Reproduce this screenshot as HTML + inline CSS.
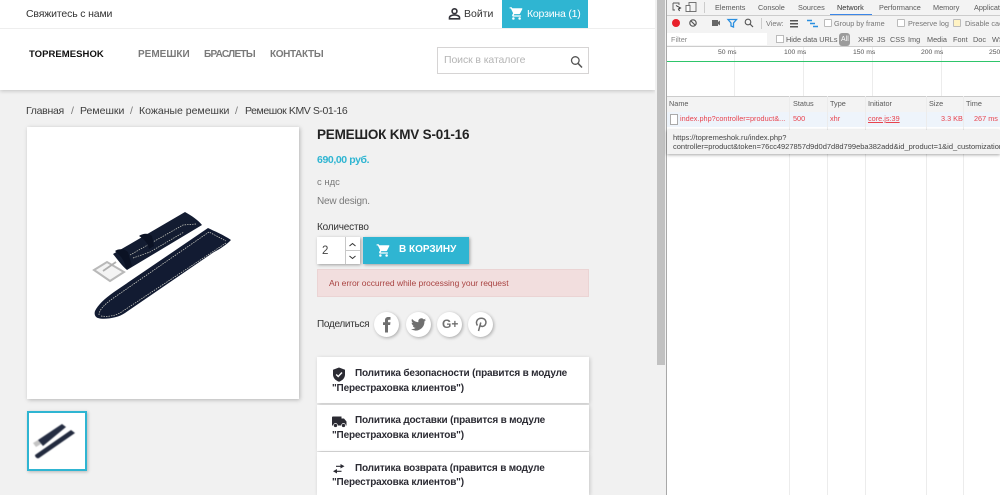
<!DOCTYPE html>
<html lang="ru"><head><meta charset="utf-8"><title>Ремешок KMV S-01-16</title>
<style>
html,body{margin:0;padding:0;width:1000px;height:495px;overflow:hidden;background:#fff;font-family:"Liberation Sans","Noto Sans CJK SC",sans-serif;}
.a{position:absolute;white-space:nowrap;}
.b{position:absolute;}
.dt{font-size:7.3px;color:#5a5a5a;}
.pol{position:absolute;left:317px;width:272px;background:#fff;}
.pt{position:absolute;font-size:10px;font-weight:bold;color:#2b2b33;white-space:nowrap;letter-spacing:-.18px;}
.ci{position:absolute;top:312px;width:25px;height:25px;border-radius:50%;background:#fff;box-shadow:1px 1px 3px rgba(0,0,0,.3);}
.vl{position:absolute;top:47px;width:1px;height:448px;background:#ececec;}
.bc{font-size:10.5px;line-height:14px;top:104px;color:#3d3d3d;}
.nv{font-size:10px;font-weight:bold;color:#7a7a7a;line-height:14px;top:48px;}
.ms{font-size:6.8px;color:#555;line-height:10px;top:48px;}
</style></head><body>

<!-- page background -->
<div class="b" style="left:0;top:0;width:655px;height:495px;background:#f1f1f1"></div>
<div class="b" style="left:0;top:0;width:655px;height:90px;background:#fff;box-shadow:0 1px 4px rgba(0,0,0,.2)"></div>
<div class="b" style="left:0;top:28px;width:655px;height:1px;background:#eeeeee"></div>

<!-- top bar -->
<div class="a" style="left:26px;top:7px;font-size:10.5px;color:#333;line-height:14px;letter-spacing:-.15px">Свяжитесь с нами</div>
<svg class="b" style="left:448px;top:7px" width="13" height="13" viewBox="0 0 13 13"><circle cx="6.5" cy="4.2" r="2.4" fill="none" stroke="#33333a" stroke-width="1.6"/><path d="M1.500 11.800V10.500c0-1.700 3-2.500 5-2.500s5 .8 5 2.500v1.300z" fill="none" stroke="#33333a" stroke-width="1.6"/></svg>
<div class="a" style="left:464px;top:7px;font-size:10.5px;color:#333;line-height:14px">Войти</div>
<div class="b" style="left:502px;top:0;width:86px;height:28px;background:#2fb5d2"></div>
<svg class="b" style="left:509px;top:6px" width="15" height="15" viewBox="0 0 24 24"><path fill="#fff" d="M7 18a2 2 0 1 0 0 4 2 2 0 0 0 0-4zM1 2v2h2l3.6 7.6-1.4 2.4c-.7 1.300.3 3 1.800 3h12v-2H7.400l1.100-2h7.500c.7 0 1.400-.4 1.700-1L21.300 5c.4-.7-.1-1.500-.9-1.500H5.200L4.300 2zM17 18a2 2 0 1 0 0 4 2 2 0 0 0 0-4z"/></svg>
<div class="a" style="left:527px;top:7px;font-size:10.5px;color:#fff;line-height:14px;letter-spacing:-.2px">Корзина (1)</div>

<!-- nav -->
<div class="a" style="left:29px;top:49px;font-size:9.500px;font-weight:bold;color:#111;line-height:12px;letter-spacing:.05px">TOPREMESHOK</div>
<div class="a nv" style="left:138px">РЕМЕШКИ</div>
<div class="a nv" style="left:204px;letter-spacing:-.7px">БРАСЛЕТЫ</div>
<div class="a nv" style="left:270px;letter-spacing:-.35px">КОНТАКТЫ</div>
<div class="b" style="left:437px;top:47px;width:150px;height:25px;border:1px solid #d6d4d4;background:#fff"></div>
<div class="a" style="left:444px;top:53px;font-size:10.5px;color:#b5b5b5;line-height:14px;letter-spacing:-.1px">Поиск в каталоге</div>
<svg class="b" style="left:570px;top:55px" width="13" height="14" viewBox="0 0 13 14"><circle cx="5.300" cy="5.500" r="3.800" fill="none" stroke="#555" stroke-width="1.300"/><path d="M8 8.300l4 4.200" stroke="#555" stroke-width="1.500" fill="none"/></svg>

<!-- breadcrumb -->
<div class="a bc" style="left:26px;letter-spacing:-.3px">Главная</div>
<div class="a bc" style="left:71px;color:#777">/</div>
<div class="a bc" style="left:80px">Ремешки</div>
<div class="a bc" style="left:130px;color:#777">/</div>
<div class="a bc" style="left:139px">Кожаные ремешки</div>
<div class="a bc" style="left:235px;color:#777">/</div>
<div class="a bc" style="left:245px;letter-spacing:-.42px">Ремешок KMV S-01-16</div>

<!-- main image -->
<div class="b" style="left:27px;top:127px;width:272px;height:272px;background:#fff;box-shadow:1px 1px 4px rgba(0,0,0,.25)"></div>
<svg class="b" style="left:27px;top:127px" width="272" height="272" viewBox="27 127 272 272">
<g style="filter:blur(.35px)">
<path d="M94 270L107 262L124 272L110 281z" fill="#f4f4f4" stroke="#b9b9b9" stroke-width="2"/>
<path d="M103 271L116 262" stroke="#b0b0b0" stroke-width="1.800"/>
<path d="M113 254L185 212C192 216 198 220 202 225L127 270C122 266 118 260 113 254z" fill="#131c31"/>
<path d="M95 311C98 305 104 299 114 292L208 228C214 231 224 235 231 240C226 245 220 249 214 252L125 313C118 318 104 320 98 318C95 317 94 314 95 311z" fill="#121b32"/>
<path d="M99 315C99 310 104 305 112 299L209 232L226 241" fill="none" stroke="#d8d8cc" stroke-width=".7" stroke-dasharray="1.500 1"/>
<path d="M101 316C108 317 116 316 123 311L226 243" fill="none" stroke="#d8d8cc" stroke-width=".7" stroke-dasharray="1.500 1"/>
<path d="M130 255L183 225L196 224" fill="none" stroke="#d0d0c4" stroke-width=".7" stroke-dasharray="1.500 1"/>
<path d="M133 258L150 252L184 232" fill="none" stroke="#d0d0c4" stroke-width=".7" stroke-dasharray="1.500 1"/>
<path d="M139 236C143 233 149 233 152 236L154 246L149 249C148 243 144 239 139 236z" fill="#0b1224"/>
<path d="M115 251C119 248 125 249 128 252L132 266L126 269C125 261 121 256 115 251z" fill="#0b1224"/>
</g>
</svg>

<!-- thumbnail -->
<div class="b" style="left:27px;top:411px;width:56px;height:56px;border:2px solid #2fb5d2;background:#fff;box-shadow:1px 1px 3px rgba(0,0,0,.25)"></div>
<svg class="b" style="left:29px;top:413px" width="56" height="56" viewBox="0 0 56 56">
<g style="filter:blur(.4px)">
<path d="M4 30L9 27L12 31L7 34z" fill="#c4c4c4"/>
<path d="M9 27L33 11L37 14L14 33z" fill="#252d42"/>
<path d="M6 42L42 17L46 20L10 45C8 46 6 44 6 42z" fill="#222a3e"/>
</g>
</svg>

<!-- product info -->
<div class="a" style="left:317px;top:126px;font-size:13.500px;font-weight:bold;color:#232323;line-height:18px;letter-spacing:-.2px">РЕМЕШОК KMV S-01-16</div>
<div class="a" style="left:317px;top:153px;font-size:10.5px;font-weight:bold;color:#2fb5d2;line-height:14px;letter-spacing:-.4px">690,00 руб.</div>
<div class="a" style="left:317px;top:177px;font-size:9.500px;color:#7a7a7a;line-height:12px">с ндс</div>
<div class="a" style="left:317px;top:195px;font-size:10px;color:#7a7a7a;line-height:14px;letter-spacing:-.2px">New design.</div>
<div class="a" style="left:317px;top:221px;font-size:10px;color:#333;line-height:14px;letter-spacing:-.2px">Количество</div>

<!-- quantity -->
<div class="b" style="left:317px;top:237px;width:43px;height:27px;background:#fff;box-shadow:1px 1px 3px rgba(0,0,0,.35)"></div>
<div class="b" style="left:345px;top:237px;width:1px;height:27px;background:#c8c8c8"></div>
<div class="b" style="left:346px;top:250px;width:14px;height:1px;background:#c8c8c8"></div>
<div class="a" style="left:322px;top:244px;font-size:11.5px;color:#444;line-height:14px">2</div>
<svg class="b" style="left:348px;top:241px" width="9" height="20" viewBox="0 0 9 20"><path d="M1.500 5L4.500 2.500L7.500 5M1.500 15L4.500 17.500L7.500 15" fill="none" stroke="#333" stroke-width="1"/></svg>

<!-- add to cart -->
<div class="b" style="left:363px;top:237px;width:106px;height:27px;background:#2fb5d2;box-shadow:1px 1px 3px rgba(0,0,0,.35)"></div>
<svg class="b" style="left:376px;top:243px" width="15" height="15" viewBox="0 0 24 24"><path fill="#fff" d="M7 18a2 2 0 1 0 0 4 2 2 0 0 0 0-4zM1 2v2h2l3.600 7.600-1.400 2.400c-.7 1.300.3 3 1.800 3h12v-2H7.400l1.100-2h7.500c.7 0 1.400-.4 1.700-1L21.300 5c.4-.7-.1-1.500-.9-1.500H5.200L4.300 2zM17 18a2 2 0 1 0 0 4 2 2 0 0 0 0-4z"/></svg>
<div class="a" style="left:399px;top:243px;font-size:10px;font-weight:bold;color:#fff;line-height:14px">В КОРЗИНУ</div>

<!-- error -->
<div class="b" style="left:317px;top:269px;width:270px;height:26px;background:#f2dede;border:1px solid #ebd4d4"></div>
<div class="a" style="left:329px;top:277px;font-size:8.500px;color:#a94442;line-height:12px;letter-spacing:-.03px">An error occurred while processing your request</div>

<!-- share -->
<div class="a" style="left:317px;top:318px;font-size:10px;color:#333;line-height:14px;letter-spacing:-.3px">Поделиться</div>
<div class="ci" style="left:374px"></div><div class="ci" style="left:406px"></div><div class="ci" style="left:437px"></div><div class="ci" style="left:468px"></div>
<svg class="b" style="left:381px;top:316px" width="12" height="17" viewBox="0 0 12 17"><path d="M4 16.500V9H2V6.300h2V4.300C4 2.200 5.200 1 7.300 1H9.500v2.700H8c-.8 0-1 .4-1 1V6.300h2.500L9.100 9H7v7.500z" fill="#6f6f6f"/></svg>
<svg class="b" style="left:411px;top:318px" width="15" height="13" viewBox="0 0 24 20"><path fill="#6f6f6f" d="M24 2.400c-.9.400-1.800.7-2.800.8 1-.6 1.800-1.600 2.200-2.700-1 .6-2 1-3.100 1.200A4.900 4.900 0 0 0 11.900 6.200C7.800 6 4.200 4 1.700.9c-1.300 2.200-.7 5.100 1.500 6.600-.8 0-1.600-.2-2.200-.6 0 2.300 1.600 4.500 4 5-.7.200-1.500.2-2.200.1.600 2 2.500 3.400 4.600 3.400A9.900 9.900 0 0 1 0 17.400 14 14 0 0 0 21.500 5c1-.7 1.900-1.600 2.500-2.600z"/></svg>
<div class="a" style="left:442px;top:317px;font-size:12px;font-weight:bold;color:#6f6f6f;line-height:15px">G+</div>
<svg class="b" style="left:475px;top:317px" width="12" height="15" viewBox="0 0 12 15"><path d="M3.500 14L5.800 5.500M2.500 8.500C.5 6 1.500 1.500 6 1.200c4-.2 5.500 3 4.700 5.500-.8 2.800-4 3.500-5.500 1.800" fill="none" stroke="#6f6f6f" stroke-width="1.500"/></svg>

<!-- policy blocks -->
<div class="pol" style="top:357px;height:46px;box-shadow:1px 1px 4px rgba(0,0,0,.18)"></div>
<div class="pol" style="top:405px;height:46px;box-shadow:1px 1px 4px rgba(0,0,0,.18)"></div>
<div class="pol" style="top:452px;height:43px;box-shadow:1px 1px 4px rgba(0,0,0,.18)"></div>
<svg class="b" style="left:332px;top:367px" width="14" height="15" viewBox="0 0 14 15"><path d="M7 .5L13 2.700V7.500C13 11 10.500 13.500 7 14.700 3.500 13.500 1 11 1 7.500V2.700z" fill="#2b2b33"/><path d="M4.200 7.500L6.200 9.500L10 5.500" fill="none" stroke="#fff" stroke-width="1.400"/></svg>
<div class="pt" style="left:355px;top:367px;line-height:14px">Политика безопасности (правится в модуле</div>
<div class="pt" style="left:332px;top:382px;line-height:14px">"Перестраховка клиентов")</div>
<svg class="b" style="left:332px;top:416px" width="15" height="12" viewBox="0 0 15 12"><path d="M0 1.500C0 .8.500.5 1 .5H9.500V2.500H12L14.500 5.500V9.500H0z" fill="#2b2b33"/><circle cx="3.500" cy="9.500" r="2" fill="#2b2b33" stroke="#fff" stroke-width=".7"/><circle cx="11.500" cy="9.500" r="2" fill="#2b2b33" stroke="#fff" stroke-width=".7"/></svg>
<div class="pt" style="left:355px;top:414px;line-height:14px">Политика доставки (правится в модуле</div>
<div class="pt" style="left:332px;top:429px;line-height:14px">"Перестраховка клиентов")</div>
<svg class="b" style="left:333px;top:464px" width="12" height="10" viewBox="0 0 12 10"><path d="M7.500 0L11.500 2.300L7.500 4.500V2.900H3V1.700H7.500zM4 5L0 7.300L4 9.500V7.900H8.500V6.700H4z" fill="#2b2b33"/></svg>
<div class="pt" style="left:355px;top:462px;line-height:14px">Политика возврата (правится в модуле</div>
<div class="pt" style="left:332px;top:476px;line-height:14px">"Перестраховка клиентов")</div>

<!-- page scrollbar -->
<div class="b" style="left:655px;top:0;width:11px;height:495px;background:#f1f1f1"></div>
<div class="b" style="left:657px;top:0;width:8px;height:365px;background:#c1c1c1"></div>

<!-- devtools -->
<div class="b" style="left:666px;top:0;width:334px;height:495px;background:#fff;border-left:1px solid #a8a8a8;box-sizing:border-box"></div>
<div class="b" style="left:667px;top:0;width:333px;height:15px;background:#f3f3f3;border-bottom:1px solid #ccc"></div>
<div class="b" style="left:667px;top:16px;width:333px;height:16px;background:#f3f3f3;border-bottom:1px solid #ccc"></div>
<div class="b" style="left:667px;top:32px;width:333px;height:14px;background:#f3f3f3;border-bottom:1px solid #ccc"></div>

<svg class="b" style="left:672px;top:2px" width="30" height="11" viewBox="0 0 30 11"><path d="M1 1H7V3M1 1V8H3" fill="none" stroke="#555" stroke-width=".9"/><path d="M4 3.500L8.500 6L6.500 7L7.500 9" fill="none" stroke="#333" stroke-width="1"/><rect x="17" y=".5" width="7" height="9" fill="none" stroke="#666" stroke-width=".9"/><rect x="14" y="3.500" width="4" height="6" fill="#fff" stroke="#666" stroke-width=".9"/></svg>
<div class="b" style="left:704px;top:2px;width:1px;height:11px;background:#ccc"></div>
<div class="a dt" style="left:715px;top:2px;line-height:11px">Elements</div>
<div class="a dt" style="left:758px;top:2px;line-height:11px">Console</div>
<div class="a dt" style="left:798px;top:2px;line-height:11px">Sources</div>
<div class="a dt" style="left:837px;top:2px;line-height:11px;color:#333">Network</div>
<div class="b" style="left:830px;top:14px;width:42px;height:1px;background:#3b86e8"></div>
<div class="a dt" style="left:879px;top:2px;line-height:11px">Performance</div>
<div class="a dt" style="left:933px;top:2px;line-height:11px">Memory</div>
<div class="a dt" style="left:974px;top:2px;line-height:11px">Application</div>

<svg class="b" style="left:670px;top:16px" width="96" height="15" viewBox="0 0 96 15">
<circle cx="6" cy="7" r="4" fill="#e8212b"/>
<circle cx="23" cy="7" r="3.200" fill="none" stroke="#555" stroke-width="1.200"/><path d="M20.500 4.500L25.500 9.500" stroke="#555" stroke-width="1.200"/>
<rect x="42" y="4" width="6" height="6" fill="#666"/><path d="M48 6L50 4.500V9.500L48 8z" fill="#666"/>
<path d="M58 3.500H66.500L63.500 7V11L61 10V7z" fill="none" stroke="#2a8fe0" stroke-width="1.300"/>
<circle cx="78" cy="6" r="2.800" fill="none" stroke="#555" stroke-width="1.100"/><path d="M80 8L83 11" stroke="#555" stroke-width="1.200"/>
<rect x="91" y="2" width="1" height="11" fill="#ccc"/>
</svg>
<div class="a dt" style="left:766px;top:18px;line-height:11px;color:#777">View:</div>
<svg class="b" style="left:790px;top:19px" width="30" height="10" viewBox="0 0 30 10"><rect x="0" y="1" width="8" height="1.500" fill="#555"/><rect x="0" y="4" width="8" height="1.500" fill="#555"/><rect x="0" y="7" width="8" height="1.500" fill="#555"/><path d="M17 1.500H22M20 4.500H25M23 7.500H28" stroke="#2a8fe0" stroke-width="1.500"/></svg>
<div class="b" style="left:824px;top:19px;width:6px;height:6px;border:1px solid #bbb;background:#fff;border-radius:1px"></div>
<div class="a dt" style="left:834px;top:18px;line-height:11px;color:#777">Group by frame</div>
<div class="b" style="left:897px;top:19px;width:6px;height:6px;border:1px solid #bbb;background:#fff;border-radius:1px"></div>
<div class="a dt" style="left:908px;top:18px;line-height:11px;color:#777">Preserve log</div>
<div class="b" style="left:953px;top:19px;width:6px;height:6px;border:1px solid #bbb;background:#fff3c4;border-radius:1px"></div>
<div class="a dt" style="left:965px;top:18px;line-height:11px;color:#777">Disable cache</div>

<div class="b" style="left:667px;top:33px;width:100px;height:12px;background:#fff"></div>
<div class="a dt" style="left:671px;top:34px;line-height:11px;color:#888">Filter</div>
<div class="b" style="left:776px;top:35px;width:6px;height:6px;border:1px solid #bbb;background:#fff"></div>
<div class="a dt" style="left:786px;top:34px;line-height:11px">Hide data URLs</div>
<div class="b" style="left:839px;top:33px;width:11px;height:13px;background:#9c9c9c;border-radius:3px"></div>
<div class="a" style="left:841px;top:34px;font-size:7px;color:#fff;line-height:11px">All</div>
<div class="a dt" style="left:858px;top:34px;line-height:11px">XHR</div>
<div class="a dt" style="left:877px;top:34px;line-height:11px">JS</div>
<div class="a dt" style="left:890px;top:34px;line-height:11px">CSS</div>
<div class="a dt" style="left:908px;top:34px;line-height:11px">Img</div>
<div class="a dt" style="left:927px;top:34px;line-height:11px">Media</div>
<div class="a dt" style="left:953px;top:34px;line-height:11px">Font</div>
<div class="a dt" style="left:973px;top:34px;line-height:11px">Doc</div>
<div class="a dt" style="left:992px;top:34px;line-height:11px">WS</div>

<!-- timeline -->
<div class="b" style="left:667px;top:47px;width:333px;height:49px;background:#fff"></div>
<div class="vl" style="left:734px;height:49px"></div>
<div class="vl" style="left:803px;height:49px"></div>
<div class="vl" style="left:872px;height:49px"></div>
<div class="vl" style="left:941px;height:49px"></div>
<div class="a ms" style="left:718px">50 ms</div>
<div class="a ms" style="left:784px">100 ms</div>
<div class="a ms" style="left:853px">150 ms</div>
<div class="a ms" style="left:921px">200 ms</div>
<div class="a ms" style="left:989px">250</div>
<div class="b" style="left:667px;top:61px;width:333px;height:1px;background:#2ec56a"></div>

<!-- table -->
<div class="b" style="left:667px;top:96px;width:333px;height:15px;background:#f3f3f3;border-top:1px solid #ccc;border-bottom:1px solid #ccc"></div>
<div class="b" style="left:667px;top:112px;width:333px;height:15px;background:#eef4fb"></div>
<div class="vl" style="left:789px;top:96px;height:399px"></div>
<div class="vl" style="left:827px;top:96px;height:399px"></div>
<div class="vl" style="left:865px;top:96px;height:399px"></div>
<div class="vl" style="left:926px;top:96px;height:399px"></div>
<div class="vl" style="left:963px;top:96px;height:399px"></div>
<div class="a dt" style="left:669px;top:98px;line-height:11px">Name</div>
<div class="a dt" style="left:793px;top:98px;line-height:11px">Status</div>
<div class="a dt" style="left:830px;top:98px;line-height:11px">Type</div>
<div class="a dt" style="left:868px;top:98px;line-height:11px">Initiator</div>
<div class="a dt" style="left:929px;top:98px;line-height:11px">Size</div>
<div class="a dt" style="left:966px;top:98px;line-height:11px">Time</div>
<div class="b" style="left:670px;top:114px;width:6px;height:9px;border:1px solid #aaa;background:#fff"></div>
<div class="a dt" style="left:680px;top:113px;line-height:11px;color:#e8434e">index.php?controller=product&amp;...</div>
<div class="a dt" style="left:793px;top:113px;line-height:11px;color:#e8434e">500</div>
<div class="a dt" style="left:830px;top:113px;line-height:11px;color:#e8434e">xhr</div>
<div class="a dt" style="left:868px;top:113px;line-height:11px;color:#e8434e;text-decoration:underline">core.js:39</div>
<div class="a dt" style="left:941px;top:113px;line-height:11px;color:#e8434e">3.3 KB</div>
<div class="a dt" style="left:974px;top:113px;line-height:11px;color:#e8434e">267 ms</div>

<!-- tooltip -->
<div class="b" style="left:667px;top:130px;width:333px;height:24px;background:#f2f2f2;box-shadow:0 1px 3px rgba(0,0,0,.35)"></div>
<div class="a" style="left:673px;top:133px;font-size:7.500px;color:#444;line-height:10px">https://topremeshok.ru/index.php?</div>
<div class="b" style="left:673px;top:142px;width:327px;height:10px;overflow:hidden;font-size:7.500px;color:#444;line-height:10px;white-space:nowrap">controller=product&amp;token=76cc4927857d9d0d7d8d799eba382add&amp;id_product=1&amp;id_customization=</div>
</body></html>
